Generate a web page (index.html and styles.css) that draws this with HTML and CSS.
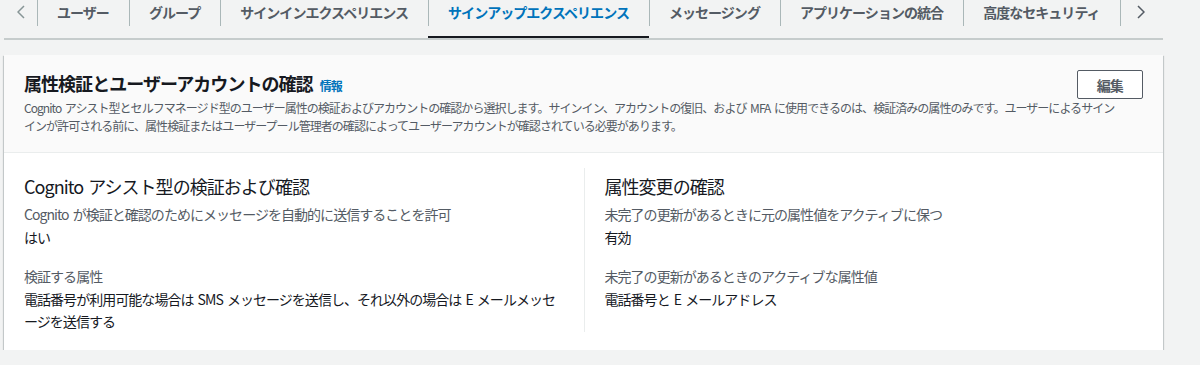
FILE: index.html
```html
<!DOCTYPE html>
<html lang="ja">

<head>
  <meta charset="UTF-8" />
  <meta name="viewport" content="width=device-width, initial-scale=1.0" />
  <title>サインアップエクスペリエンス</title>
  <link rel="stylesheet" href="styles.css">
</head>

<body>
  <div class="page">
    <!-- tabs -->
    <nav class="tabs">
      <span class="tab-arrow tab-arrow-left">
        <svg width="8" height="14" viewBox="0 0 8 14"><path d="M7 1 1 7l6 6" fill="none" stroke="currentColor" stroke-width="1.5" /></svg>
      </span>
      <a class="tab">ユーザー</a>
      <a class="tab">グループ</a>
      <a class="tab">サインインエクスペリエンス</a>
      <a class="tab active">サインアップエクスペリエンス</a>
      <a class="tab">メッセージング</a>
      <a class="tab">アプリケーションの統合</a>
      <a class="tab">高度なセキュリティ</a>
      <span class="tab-arrow tab-arrow-right">
        <svg width="8" height="14" viewBox="0 0 8 14"><path d="M1 1l6 6-6 6" fill="none" stroke="currentColor" stroke-width="1.5" /></svg>
      </span>
    </nav>

    <!-- card -->
    <section class="card">
      <header class="card-header">
        <div class="title-row">
          <h2 class="title">属性検証とユーザーアカウントの確認 <a class="info">情報</a></h2>
          <button class="btn">編集</button>
        </div>
        <p class="desc">Cognito アシスト型とセルフマネージド型のユーザー属性の検証およびアカウントの確認から選択します。サインイン、アカウントの復旧、および MFA に使用できるのは、検証済みの属性のみです。ユーザーによるサインインが許可される前に、属性検証またはユーザープール管理者の確認によってユーザーアカウントが確認されている必要があります。</p>
      </header>

      <div class="card-body">
        <div class="col">
          <h3 class="col-title">Cognito アシスト型の検証および確認</h3>
          <div class="field">
            <div class="label">Cognito が検証と確認のためにメッセージを自動的に送信することを許可</div>
            <div class="value">はい</div>
          </div>
          <div class="field">
            <div class="label">検証する属性</div>
            <div class="value">電話番号が利用可能な場合は SMS メッセージを送信し、それ以外の場合は E メールメッセージを送信する</div>
          </div>
        </div>
        <div class="col">
          <h3 class="col-title">属性変更の確認</h3>
          <div class="field">
            <div class="label">未完了の更新があるときに元の属性値をアクティブに保つ</div>
            <div class="value">有効</div>
          </div>
          <div class="field">
            <div class="label">未完了の更新があるときのアクティブな属性値</div>
            <div class="value">電話番号と E メールアドレス</div>
          </div>
        </div>
      </div>
    </section>
  </div>
</body>

</html>
```

FILE: styles.css
```css
*,
::before,
::after {
  box-sizing: border-box;
}

html {
  font-family: "Noto Sans CJK JP", "Noto Sans", sans-serif;
  letter-spacing: -0.06em;
  word-spacing: 0.12em;
}

body {
  margin: 0;
  background: #f2f3f3;
  color: #16191f;
}

.page {
  width: 1159px;
  margin-left: 4px;
}

/* tabs */
.tabs {
  display: flex;
  height: 40px;
  border-bottom: 2px solid #c6cccc;
}

.tab,
.tab-arrow {
  height: 38px;
  line-height: 24px;
  background: linear-gradient(#aab7b8, #aab7b8) left top / 1px 26px no-repeat;
}

.tab {
  padding: 0 20px;
  font-size: 14px;
  font-weight: 700;
  color: #545b64;
  white-space: nowrap;
  border-bottom: 2px solid transparent;
}

.tab.active {
  color: #0073bb;
  border-bottom-color: #16191f;
}

.tab-arrow {
  display: flex;
  justify-content: center;
  padding-top: 5px;
}

.tab-arrow-left {
  width: 33px;
  background: none;
  color: #879596;
}

.tab-arrow-right {
  flex: 1;
  color: #545b64;
}

.tab-arrow svg {
  display: block;
}

/* card */
.card {
  margin-top: 15px;
  background: #fff;
  box-shadow: 0 1px 1px 0 rgba(0, 28, 36, 0.3), 1px 1px 1px 0 rgba(0, 28, 36, 0.15), -1px 1px 1px 0 rgba(0, 28, 36, 0.15);
}

.card-header {
  background: #fafafa;
  border-bottom: 1px solid #eaeded;
  padding: 15px 20px 17px;
}

.title-row {
  display: flex;
  justify-content: space-between;
  align-items: center;
}

.title {
  margin: 0;
  font-size: 18px;
  line-height: 26px;
  font-weight: 700;
}

.info {
  margin-left: 2px;
  font-size: 12px;
  font-weight: 700;
  color: #0073bb;
}

.btn {
  height: 29px;
  padding: 0 19px;
  border: 1px solid #545b64;
  border-radius: 2px;
  background: #fff;
  color: #545b64;
  font: inherit;
  font-size: 14px;
  font-weight: 700;
  letter-spacing: -0.06em;
}

.desc {
  margin: 0;
  padding-right: 24px;
  font-size: 12px;
  line-height: 18px;
  color: #545b64;
}

.card-body {
  display: grid;
  grid-template-columns: 1fr 1fr;
  padding: 15px 20px 18px;
}

.col {
  padding: 6px 20px 0 0;
}

.col + .col {
  padding: 6px 0 0 20px;
  border-left: 1px solid #eaeded;
}

.col-title {
  margin: 0 0 5px;
  font-size: 18px;
  line-height: 24px;
  font-weight: 400;
}

.field + .field {
  margin-top: 17px;
}

.label,
.value {
  font-size: 14px;
  line-height: 22px;
}

.label {
  color: #545b64;
}

.value {
  margin-top: 1px;
}
```
